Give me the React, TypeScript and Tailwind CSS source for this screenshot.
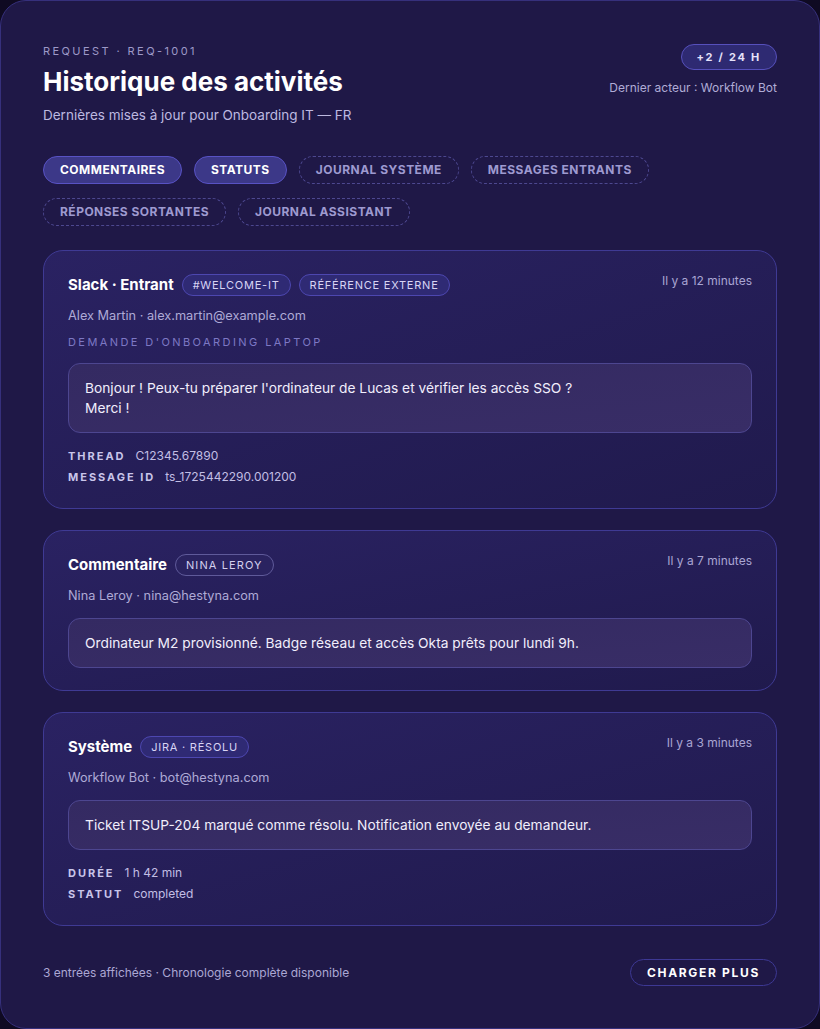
import React from 'react';

type Meta = { label: string; value: string };
type Tag = { text: string; muted?: boolean };

type Entry = {
  title: string;
  tags: Tag[];
  time: string;
  author: string;
  subject?: string;
  body: string[];
  meta?: Meta[];
};

const tabs = [
  { label: 'Commentaires', active: true },
  { label: 'Statuts', active: true },
  { label: 'Journal système', active: false },
  { label: 'Messages entrants', active: false },
  { label: 'Réponses sortantes', active: false },
  { label: 'Journal assistant', active: false },
];

const entries: Entry[] = [
  {
    title: 'Slack · Entrant',
    tags: [{ text: '#welcome-it' }, { text: 'Référence externe' }],
    time: 'Il y a 12 minutes',
    author: 'Alex Martin · alex.martin@example.com',
    subject: "Demande d'onboarding laptop",
    body: ["Bonjour ! Peux-tu préparer l'ordinateur de Lucas et vérifier les accès SSO ?", 'Merci !'],
    meta: [
      { label: 'Thread', value: 'C12345.67890' },
      { label: 'Message ID', value: 'ts_1725442290.001200' },
    ],
  },
  {
    title: 'Commentaire',
    tags: [{ text: 'Nina Leroy', muted: true }],
    time: 'Il y a 7 minutes',
    author: 'Nina Leroy · nina@hestyna.com',
    body: ['Ordinateur M2 provisionné. Badge réseau et accès Okta prêts pour lundi 9h.'],
  },
  {
    title: 'Système',
    tags: [{ text: 'Jira · résolu' }],
    time: 'Il y a 3 minutes',
    author: 'Workflow Bot · bot@hestyna.com',
    body: ['Ticket ITSUP-204 marqué comme résolu. Notification envoyée au demandeur.'],
    meta: [
      { label: 'Durée', value: '1 h 42 min' },
      { label: 'Statut', value: 'completed' },
    ],
  },
];

const EntryCard = ({ entry }: { entry: Entry }) => (
  <article className="rounded-[20px] border border-[#3f3a94] bg-gradient-to-br from-[#2a2262] to-[#201a4d] px-6 pt-[23px] pb-[22px]">
    <div className="flex items-start justify-between">
      <div className="flex h-[22px] items-center gap-2">
        <h3 className="text-[15px] font-bold text-white">{entry.title}</h3>
        {entry.tags.map((t) => (
          <span
            key={t.text}
            className={
              t.muted
                ? 'flex h-[22px] items-center rounded-full border border-[#5f5a9a] bg-[#2a2360] px-[10px] text-[11px] uppercase tracking-[0.1em] text-[#d4d0ee]'
                : 'flex h-[22px] items-center rounded-full border border-[#4d47b0] bg-[#2f2a74] px-[10px] text-[11px] uppercase tracking-[0.07em] text-[#d8d4f4]'
            }
          >
            {t.text}
          </span>
        ))}
      </div>
      <span className="text-[12px] leading-[14px] text-[#a9a5d3]">{entry.time}</span>
    </div>
    <p className="mt-[11px] text-[12.75px] leading-[18px] text-[#aeaad6]">{entry.author}</p>
    {entry.subject && (
      <p className="mt-[10px] text-[11px] uppercase leading-[14px] tracking-[0.22em] text-[#7d78c4]">
        {entry.subject}
      </p>
    )}
    <div
      className={`${entry.subject ? 'mt-[14px]' : 'mt-[13px]'} rounded-xl border border-[#4d4690] bg-gradient-to-br from-[#342a62] to-[#382d66] px-4 py-[14px] text-[13.75px] leading-5 text-[#f1eefc]`}
    >
      {entry.body.map((line) => (
        <p key={line}>{line}</p>
      ))}
    </div>
    {entry.meta && (
      <div className="mt-[14px] flex flex-col gap-[3px]">
        {entry.meta.map((m) => (
          <div key={m.label} className="flex items-center gap-[10px] leading-[18px]">
            <span className="text-[11px] font-bold uppercase tracking-[0.18em] text-[#c9c5ea]">{m.label}</span>
            <span className="text-[12px] text-[#c2bee4]">{m.value}</span>
          </div>
        ))}
      </div>
    )}
  </article>
);

export default function App() {
  return (
    <div className="min-h-screen bg-[#0f0a22]" style={{ fontFamily: 'Inter, "Noto Sans", sans-serif' }}>
      <div className="rounded-[26px] border border-[#36307c] bg-[#1f1847] px-[42px] pt-[43px] pb-[42px]">
        <header className="flex items-start justify-between">
          <div>
            <p className="text-[11px] leading-[14px] tracking-[0.22em] text-[#9d99c8]">REQUEST · REQ-1001</p>
            <h1 className="mt-2 text-[26px] font-bold leading-8 text-white">Historique des activités</h1>
            <p className="mt-[7px] text-[13.5px] leading-5 text-[#bdb9e0]">Dernières mises à jour pour Onboarding IT — FR</p>
          </div>
          <div className="flex flex-col items-end">
            <span className="flex h-[26px] items-center rounded-full border border-[#5650bc] bg-[#2e2a72] px-[15px] text-[11px] font-bold tracking-[0.16em] text-[#e6e2fa]">
              +2 / 24 H
            </span>
            <span className="mt-[9px] text-[12px] text-[#b0acd6]">Dernier acteur : Workflow Bot</span>
          </div>
        </header>

        <nav className="mt-[31px] flex flex-wrap gap-x-3 gap-y-[14px]">
          {tabs.map((t) => (
            <button
              key={t.label}
              className={
                t.active
                  ? 'flex h-[28px] items-center rounded-full border border-[#5852c4] bg-[#3c3888] px-4 text-[12px] font-bold uppercase tracking-[0.04em] text-white'
                  : 'flex h-[28px] items-center rounded-full border border-dashed border-[#4d4890] px-4 text-[12px] font-bold uppercase tracking-[0.04em] text-[#9e9ad0]'
              }
            >
              {t.label}
            </button>
          ))}
        </nav>

        <section className="mt-6 flex flex-col gap-[21px]">
          {entries.map((e) => (
            <EntryCard key={e.title} entry={e} />
          ))}
        </section>

        <footer className="mt-[33px] flex items-center justify-between">
          <span className="text-[12px] text-[#aba7d4]">3 entrées affichées · Chronologie complète disponible</span>
          <button className="flex h-[27px] items-center rounded-full border border-[#3d3894] px-4 text-[12px] font-bold tracking-[0.14em] text-white">
            CHARGER PLUS
          </button>
        </footer>
      </div>
    </div>
  );
}
